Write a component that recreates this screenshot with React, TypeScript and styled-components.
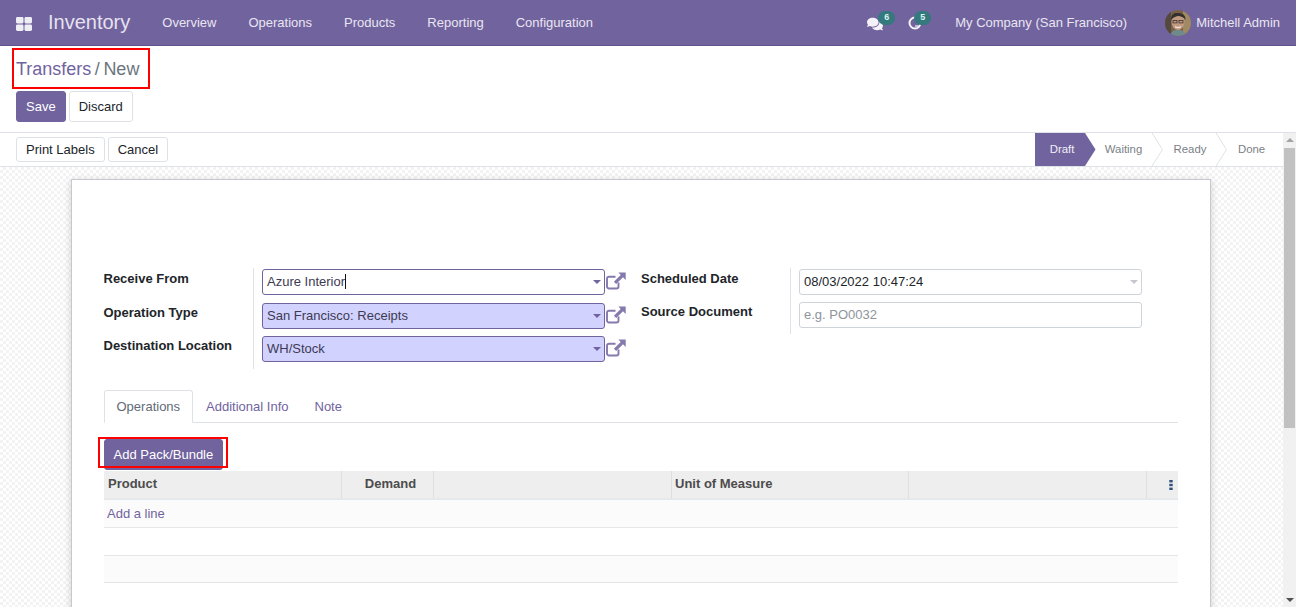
import React from "react";
import styled, { createGlobalStyle } from "styled-components";
import { FaComments } from "react-icons/fa";

const Global = createGlobalStyle`
  html, body { margin: 0; padding: 0; width: 1296px; height: 607px; overflow: hidden; background: #fff; }
  body { font-family: "Liberation Sans", Arial, sans-serif; font-size: 13px; color: #4c4c4c; }
  * { box-sizing: border-box; }
`;

const PURPLE = "#71639e";

const Page = styled.div`
  position: relative;
  width: 1296px;
  height: 607px;
  display: flex;
  flex-direction: column;
  overflow: hidden;
`;

const Navbar = styled.header`
  flex: none;
  height: 46px;
  background: ${PURPLE};
  border-bottom: 1px solid #5f5389;
  display: flex;
  align-items: center;
  color: #e9e6f1;
  padding: 0 16px 0 16px;
`;
const AppsIcon = styled.svg`
  width: 16px;
  height: 14px;
  flex: none;
  margin-right: 16px;
  margin-top: 2px;
`;
const Brand = styled.span`
  font-size: 20px;
  color: #e6e2ef;
  margin-right: 32px;
  margin-top: -1px;
`;
const NavItem = styled.span<{ $gap?: number }>`
  font-size: 13px;
  color: #e9e6f1;
  margin-right: ${(p) => p.$gap ?? 32}px;
  margin-top: -1px;
  white-space: nowrap;
`;
const NavSpacer = styled.div`
  flex: 1;
`;
const Systray = styled.div<{ $gap: number }>`
  position: relative;
  width: 18px;
  height: 16px;
  flex: none;
  margin-right: ${(p) => p.$gap}px;
  margin-top: 3px;
  color: #f4f2f8;
  display: flex;
`;
const Badge = styled.span<{ $left: number }>`
  position: absolute;
  left: ${(p) => p.$left}px;
  top: -5px;
  min-width: 17px;
  height: 14px;
  padding: 0 4px;
  border-radius: 8px;
  background: #33797d;
  color: #dff1f0;
  font-size: 9px;
  font-weight: 700;
  line-height: 13px;
  text-align: center;
`;
const Avatar = styled.svg`
  width: 26px;
  height: 26px;
  flex: none;
  margin-right: 5px;
  border-radius: 50%;
  margin-top: 1px;
`;

const ControlPanel = styled.div`
  flex: none;
  height: 87px;
  padding: 11px 16px 0;
  border-bottom: 1px solid #dee2e6;
`;
const Breadcrumb = styled.div`
  font-size: 18px;
  line-height: 25px;
  height: 34px;
  color: ${PURPLE};
  display: flex;
`;
const Sep = styled.span`
  color: #6c757d;
  margin: 0 3.5px;
`;
const Current = styled.span`
  color: #6c757d;
`;
const Buttons = styled.div`
  display: flex;
  gap: 3px;
`;
const Btn = styled.button<{ $primary?: boolean; $h?: number }>`
  height: ${(p) => p.$h ?? 31}px;
  padding: 0 9px;
  font: 13px "Liberation Sans", Arial, sans-serif;
  border-radius: 3px;
  border: 1px solid ${(p) => (p.$primary ? PURPLE : "#dee2e6")};
  background: ${(p) => (p.$primary ? PURPLE : "#fff")};
  color: ${(p) => (p.$primary ? "#fff" : "#212529")};
`;
const AddBtn = styled(Btn)`
  padding: 0 8.5px;
`;

const Lower = styled.div`
  flex: 1;
  min-height: 0;
  display: flex;
`;
const MainCol = styled.div`
  flex: 1;
  min-width: 0;
  display: flex;
  flex-direction: column;
`;
const StatusRow = styled.div`
  flex: none;
  height: 34px;
  border-bottom: 1px solid #dee2e6;
  padding-left: 16px;
  display: flex;
  align-items: center;
  justify-content: space-between;
`;
const StatusActions = styled.div`
  display: flex;
  gap: 3px;
  margin-top: -1px;
`;
const Steps = styled.div`
  display: flex;
  height: 33px;
  margin-top: -1px;
  margin-right: 3px;
`;
const Step = styled.div<{ $w: number; $active?: boolean; $indent?: number }>`
  position: relative;
  width: ${(p) => p.$w}px;
  height: 33px;
  font-size: 11.375px;
  line-height: 32px;
  text-align: center;
  padding-left: ${(p) => p.$indent ?? 0}px;
  color: ${(p) => (p.$active ? "#f2f0f7" : "#7a7f86")};
  background: ${(p) => (p.$active ? PURPLE : "transparent")};
`;
const StepChevron = styled.svg`
  position: absolute;
  left: 100%;
  top: 0;
  width: 11px;
  height: 33px;
  z-index: 1;
`;

const Canvas = styled.main`
  flex: 1;
  min-height: 0;
  overflow: hidden;
  padding: 13px 72px 0 71px;
  background-color: #fff;
  background-image: repeating-conic-gradient(#f3f3f3 0 25%, #fff 0 50%);
  background-size: 6px 6px;
`;
const Sheet = styled.div`
  width: 1140px;
  height: 600px;
  margin-top: -1px;
  background: #fff;
  border: 1px solid #c8c8d0;
  box-shadow: 0 2px 8px rgba(0, 0, 0, 0.18);
  padding: 88px 32px 0 32px;
`;
const Groups = styled.div`
  display: flex;
  height: 102px;
  margin-left: -0.5px;
`;
const Group = styled.div<{ $w: number; $label: number; $h?: number; $row: number }>`
  display: grid;
  grid-template-columns: ${(p) => p.$label}px 1fr;
  grid-auto-rows: ${(p) => p.$row}px;
  width: ${(p) => p.$w}px;
  height: ${(p) => p.$h ?? 102}px;
  align-content: start;
`;
const Label = styled.label`
  font-weight: 700;
  color: #212529;
  font-size: 13px;
  line-height: 15px;
  padding-top: 3px;
  border-right: 1px solid #dee2e6;
`;
const FieldCell = styled.div`
  display: flex;
  align-items: flex-start;
  padding-left: 8px;
  padding-top: 1px;
`;
const Field = styled.div<{ $tone?: "focus" | "required" | "plain" }>`
  position: relative;
  width: 343px;
  height: 26px;
  flex: none;
  border-radius: 3px;
  padding: 0 4px;
  font-size: 13px;
  line-height: 24px;
  color: ${(p) => (p.$tone === "plain" ? "#212529" : "#3d3b52")};
  border: 1px solid ${(p) => (p.$tone === "plain" ? "#ced4da" : PURPLE)};
  background: ${(p) => (p.$tone === "required" ? "#d2d2ff" : "#fff")};
`;
const Placeholder = styled.span`
  color: #8d949b;
`;
const Caret = styled.span`
  position: absolute;
  right: 3px;
  top: 10px;
  width: 0;
  height: 0;
  border-left: 4px solid transparent;
  border-right: 4px solid transparent;
  border-top: 4px solid ${(p) => p.color};
`;
const TextCursor = styled.span`
  display: inline-block;
  width: 1px;
  height: 15px;
  background: #111;
  vertical-align: -3px;
`;
const ExtLink = styled.svg`
  width: 20px;
  height: 20px;
  flex: none;
  margin: 3px 0 0 0.5px;
  color: #8679ad;
`;

const Tabs = styled.nav`
  display: flex;
  height: 33px;
  margin-top: 20px;
  border-bottom: 1px solid #dee2e6;
`;
const Tab = styled.div<{ $active?: boolean }>`
  height: 33px;
  padding: 0 12px 0 ${(p) => (p.$active ? 11.5 : 12)}px;
  line-height: 31px;
  font-size: 13px;
  border-radius: 3px 3px 0 0;
  color: ${(p) => (p.$active ? "#5f6b76" : PURPLE)};
  border: 1px solid ${(p) => (p.$active ? "#dee2e6" : "transparent")};
  border-bottom-color: ${(p) => (p.$active ? "#fff" : "transparent")};
`;
const AddRow = styled.div`
  display: flex;
  padding-top: 16px;
  height: 48px;
`;
const Table = styled.div`
  display: flex;
  flex-direction: column;
`;
const HeadRow = styled.div`
  display: grid;
  grid-template-columns: 238px 92px 238px 237px 238px 31px;
  height: 29px;
  background: #eeeeee;
  border-bottom: 2px solid #e6e9ec;
`;
const HeadCell = styled.div<{ $center?: boolean; $pad?: number }>`
  position: relative;
  font-weight: 700;
  font-size: 13px;
  line-height: 25px;
  padding: 0 4px 0 ${(p) => p.$pad ?? 4}px;
  color: #4c4c4c;
  text-align: ${(p) => (p.$center ? "center" : "left")};
  border-right: 1px solid #dfdfdf;
  &:last-child {
    border-right: 0;
  }
`;
const KebabIcon = styled.svg`
  position: absolute;
  right: 5px;
  top: 9px;
  width: 4px;
  height: 10px;
`;
const Row = styled.div<{ $odd?: boolean }>`
  height: 28px;
  background: ${(p) => (p.$odd ? "#fbfbfb" : "#fff")};
  border-bottom: 1px solid #e6e6e6;
  padding-left: 3px;
  line-height: 27px;
  color: ${PURPLE};
  &:last-child {
    height: 27px;
  }
`;

const ScrollTrack = styled.div`
  flex: none;
  width: 13px;
  background: #f1f1f1;
  display: flex;
  flex-direction: column;
  align-items: center;
`;
const ScrollArrow = styled.span<{ $down?: boolean }>`
  flex: none;
  margin-top: ${(p) => (p.$down ? "auto" : "5px")};
  margin-bottom: ${(p) => (p.$down ? "5px" : "0")};
  width: 0;
  height: 0;
  border-left: 4px solid transparent;
  border-right: 4px solid transparent;
  ${(p) => (p.$down ? "border-top: 4px solid #505050;" : "border-bottom: 4px solid #a3a3a3;")}
`;
const ScrollThumb = styled.span`
  flex: none;
  width: 11px;
  height: 280px;
  margin-top: 6px;
  background: #c1c1c1;
`;

const Annotation = styled.div<{ $x: number; $y: number; $w: number; $h: number }>`
  position: absolute;
  left: ${(p) => p.$x}px;
  top: ${(p) => p.$y}px;
  width: ${(p) => p.$w}px;
  height: ${(p) => p.$h}px;
  border: 2px solid #f00;
  pointer-events: none;
`;

const Ext = () => (
  <ExtLink viewBox="0 0 20 20" fill="none">
    <path
      d="M12.500 10.500V14.500a2 2 0 0 1-2 2H3a2 2 0 0 1-2-2V6.700a2 2 0 0 1 2-2H9.500"
      stroke="currentColor"
      strokeWidth="1.900"
    />
    <path d="M12.400 0.600H19.700V7.900L17 5.300 10.200 12.100 7.900 9.800 14.700 3Z" fill="currentColor" />
  </ExtLink>
);

const Chevron = () => (
  <StepChevron viewBox="0 0 11 33" fill="none">
    <path d="M0 0 L10.500 16.500 L0 33" stroke="#dee2e6" strokeWidth="1" />
  </StepChevron>
);

const Face = () => (
  <Avatar viewBox="0 0 26 26">
    <rect width="26" height="26" fill="#7a6248" />
    <rect x="18" y="0" width="8" height="26" fill="#a08a63" />
    <rect x="0" y="0" width="6" height="26" fill="#54483f" />
    <ellipse cx="13" cy="12" rx="6.400" ry="8" fill="#c29a80" />
    <path d="M6 10C6 3 10 3 13 3s8 1 7.500 7c-2-3-5-4-7-4s-5 1-7.500 4Z" fill="#33302f" />
    <rect x="8" y="10.500" width="4" height="2.400" fill="none" stroke="#3a3230" strokeWidth="0.800" />
    <rect x="14" y="10.500" width="4" height="2.400" fill="none" stroke="#3a3230" strokeWidth="0.800" />
    <path d="M10 16.500c2 1.500 4 1.500 6 0" stroke="#f1e6dc" strokeWidth="1.100" fill="none" />
    <path d="M5 26c1-5 4-6 8-6s7 1 8 6Z" fill="#6f8a8c" />
  </Avatar>
);

export default function App() {
  return (
    <Page>
      <Global />
      <Navbar>
        <AppsIcon viewBox="0 0 16 14">
          <rect x="0" y="0" width="7.500" height="6.500" rx="1.400" fill="#f0eef5" />
          <rect x="8.500" y="0" width="7.500" height="6.500" rx="1.400" fill="#f0eef5" />
          <rect x="0" y="7.500" width="7.500" height="6.500" rx="1.400" fill="#f0eef5" />
          <rect x="8.500" y="7.500" width="7.500" height="6.500" rx="1.400" fill="#f0eef5" />
        </AppsIcon>
        <Brand>Inventory</Brand>
        <NavItem>Overview</NavItem>
        <NavItem>Operations</NavItem>
        <NavItem>Products</NavItem>
        <NavItem>Reporting</NavItem>
        <NavItem>Configuration</NavItem>
        <NavSpacer />
        <Systray $gap={23}>
          <FaComments size={16} />
          <Badge $left={11}>6</Badge>
        </Systray>
        <Systray $gap={29}>
          <svg viewBox="0 0 18 16" width="18" height="16" fill="none" stroke="currentColor" strokeWidth="2">
            <circle cx="7" cy="7" r="5.500" />
            <path d="M7 10h3.500" strokeWidth="1.200" />
          </svg>
          <Badge $left={6}>5</Badge>
        </Systray>
        <NavItem $gap={38}>My Company (San Francisco)</NavItem>
        <Face />
        <NavItem $gap={0}>Mitchell Admin</NavItem>
      </Navbar>

      <ControlPanel>
        <Breadcrumb>
          Transfers<Sep>/</Sep><Current>New</Current>
        </Breadcrumb>
        <Buttons>
          <Btn $primary>Save</Btn>
          <Btn>Discard</Btn>
        </Buttons>
      </ControlPanel>

      <Lower>
        <MainCol>
          <StatusRow>
            <StatusActions>
              <Btn $h={25}>Print Labels</Btn>
              <Btn $h={25}>Cancel</Btn>
            </StatusActions>
            <Steps>
              <Step $w={50} $active $indent={4}>
                Draft
                <StepChevron viewBox="0 0 11 33">
                  <path d="M0 0 L10.500 16.500 L0 33Z" fill={PURPLE} />
                </StepChevron>
              </Step>
              <Step $w={67} $indent={10}>
                Waiting
                <Chevron />
              </Step>
              <Step $w={64} $indent={12}>
                Ready
                <Chevron />
              </Step>
              <Step $w={64} $indent={7}>
                Done
              </Step>
            </Steps>
          </StatusRow>
          <Canvas>
            <Sheet>
              <Groups>
                <Group $w={537.5} $label={150.5} $row={33.5}>
                  <Label>Receive From</Label>
                  <FieldCell>
                    <Field $tone="focus">
                      Azure Interior<TextCursor />
                      <Caret color="#71639e" />
                    </Field>
                    <Ext />
                  </FieldCell>
                  <Label>Operation Type</Label>
                  <FieldCell>
                    <Field $tone="required">
                      San Francisco: Receipts
                      <Caret color="#71639e" />
                    </Field>
                    <Ext />
                  </FieldCell>
                  <Label>Destination Location</Label>
                  <FieldCell>
                    <Field $tone="required">
                      WH/Stock
                      <Caret color="#71639e" />
                    </Field>
                    <Ext />
                  </FieldCell>
                </Group>
                <Group $w={510} $label={150} $h={66} $row={33}>
                  <Label>Scheduled Date</Label>
                  <FieldCell>
                    <Field $tone="plain">
                      08/03/2022 10:47:24
                      <Caret color="#c4c8cc" />
                    </Field>
                  </FieldCell>
                  <Label>Source Document</Label>
                  <FieldCell>
                    <Field $tone="plain">
                      <Placeholder>e.g. PO0032</Placeholder>
                    </Field>
                  </FieldCell>
                </Group>
              </Groups>
              <Tabs>
                <Tab $active>Operations</Tab>
                <Tab>Additional Info</Tab>
                <Tab>Note</Tab>
              </Tabs>
              <AddRow>
                <AddBtn $primary>Add Pack/Bundle</AddBtn>
              </AddRow>
              <Table>
                <HeadRow>
                  <HeadCell>Product</HeadCell>
                  <HeadCell $center $pad={10}>Demand</HeadCell>
                  <HeadCell />
                  <HeadCell $pad={3}>Unit of Measure</HeadCell>
                  <HeadCell />
                  <HeadCell>
                    <KebabIcon viewBox="0 0 4 10" fill="#33507a">
                      <rect width="3.400" height="2.400" x="0.300" y="0" />
                      <rect width="3.400" height="2.400" x="0.300" y="3.800" />
                      <rect width="3.400" height="2.400" x="0.300" y="7.600" />
                    </KebabIcon>
                  </HeadCell>
                </HeadRow>
                <Row $odd>Add a line</Row>
                <Row />
                <Row $odd />
              </Table>
            </Sheet>
          </Canvas>
        </MainCol>
        <ScrollTrack>
          <ScrollArrow />
          <ScrollThumb />
          <ScrollArrow $down />
        </ScrollTrack>
      </Lower>

      <Annotation $x={12} $y={48} $w={138} $h={41} />
      <Annotation $x={98} $y={437} $w={130} $h={31} />
    </Page>
  );
}
